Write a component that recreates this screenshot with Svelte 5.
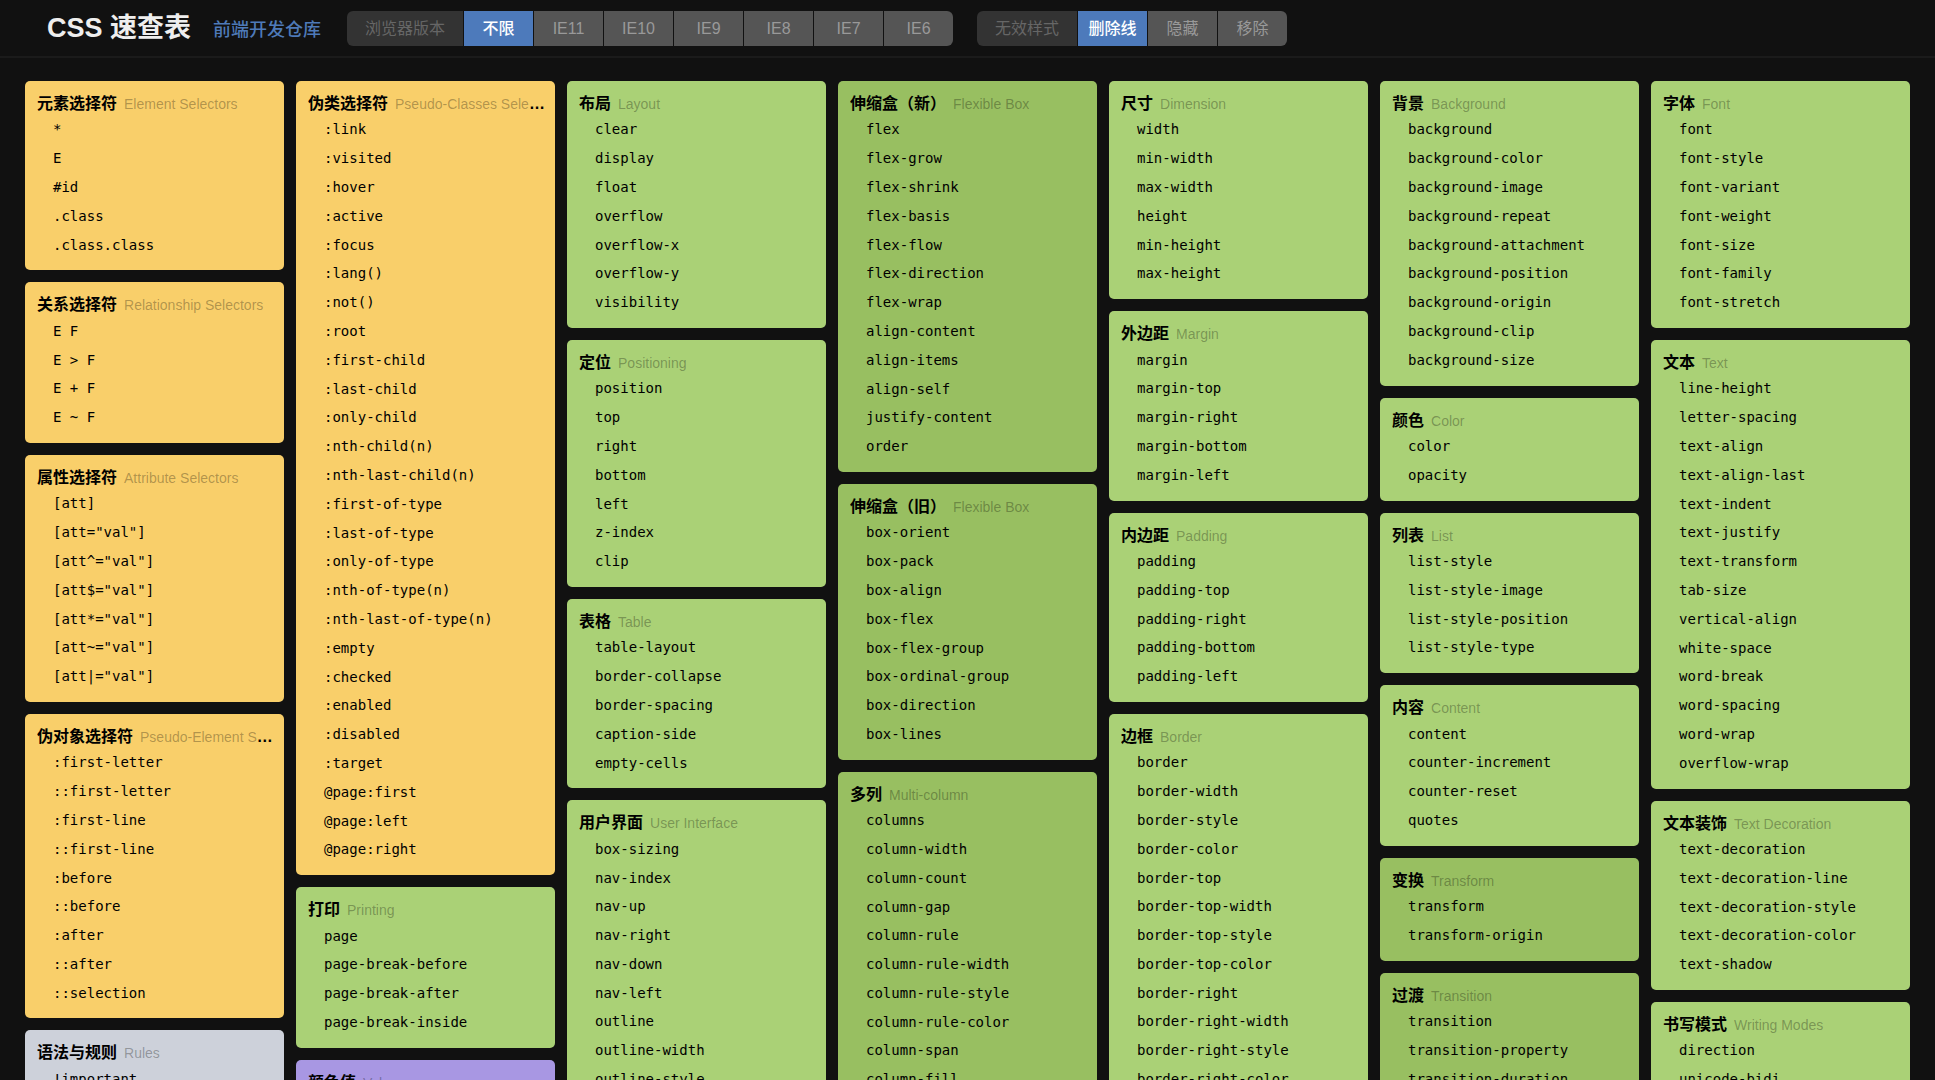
<script>
  const versions = ['不限', 'IE11', 'IE10', 'IE9', 'IE8', 'IE7', 'IE6'];
  const modes = ['删除线', '隐藏', '移除'];
  let version = $state('不限');
  let mode = $state('删除线');

  const card = (tone, title, sub, items) => ({ tone, title, sub, items: items.split('|') });

  const columns = [
    [
      card('yellow', '元素选择符', 'Element Selectors', '*|E|#id|.class|.class.class'),
      card('yellow', '关系选择符', 'Relationship Selectors', 'E F|E > F|E + F|E ~ F'),
      {
        tone: 'yellow', title: '属性选择符', sub: 'Attribute Selectors',
        items: ['[att]', '[att="val"]', '[att^="val"]', '[att$="val"]', '[att*="val"]', '[att~="val"]', '[att|="val"]']
      },
      card('yellow', '伪对象选择符', 'Pseudo-Element Selectors', ':first-letter|::first-letter|:first-line|::first-line|:before|::before|:after|::after|::selection'),
      card('gray', '语法与规则', 'Rules', '!important')
    ],
    [
      card('yellow', '伪类选择符', 'Pseudo-Classes Selectors', ':link|:visited|:hover|:active|:focus|:lang()|:not()|:root|:first-child|:last-child|:only-child|:nth-child(n)|:nth-last-child(n)|:first-of-type|:last-of-type|:only-of-type|:nth-of-type(n)|:nth-last-of-type(n)|:empty|:checked|:enabled|:disabled|:target|@page:first|@page:left|@page:right'),
      card('green', '打印', 'Printing', 'page|page-break-before|page-break-after|page-break-inside'),
      card('purple', '颜色值', 'Values', 'Color Name')
    ],
    [
      card('green', '布局', 'Layout', 'clear|display|float|overflow|overflow-x|overflow-y|visibility'),
      card('green', '定位', 'Positioning', 'position|top|right|bottom|left|z-index|clip'),
      card('green', '表格', 'Table', 'table-layout|border-collapse|border-spacing|caption-side|empty-cells'),
      card('green', '用户界面', 'User Interface', 'box-sizing|nav-index|nav-up|nav-right|nav-down|nav-left|outline|outline-width|outline-style')
    ],
    [
      card('olive', '伸缩盒（新）', 'Flexible Box', 'flex|flex-grow|flex-shrink|flex-basis|flex-flow|flex-direction|flex-wrap|align-content|align-items|align-self|justify-content|order'),
      card('olive', '伸缩盒（旧）', 'Flexible Box', 'box-orient|box-pack|box-align|box-flex|box-flex-group|box-ordinal-group|box-direction|box-lines'),
      card('olive', '多列', 'Multi-column', 'columns|column-width|column-count|column-gap|column-rule|column-rule-width|column-rule-style|column-rule-color|column-span|column-fill')
    ],
    [
      card('green', '尺寸', 'Dimension', 'width|min-width|max-width|height|min-height|max-height'),
      card('green', '外边距', 'Margin', 'margin|margin-top|margin-right|margin-bottom|margin-left'),
      card('green', '内边距', 'Padding', 'padding|padding-top|padding-right|padding-bottom|padding-left'),
      card('green', '边框', 'Border', 'border|border-width|border-style|border-color|border-top|border-top-width|border-top-style|border-top-color|border-right|border-right-width|border-right-style|border-right-color')
    ],
    [
      card('green', '背景', 'Background', 'background|background-color|background-image|background-repeat|background-attachment|background-position|background-origin|background-clip|background-size'),
      card('green', '颜色', 'Color', 'color|opacity'),
      card('green', '列表', 'List', 'list-style|list-style-image|list-style-position|list-style-type'),
      card('green', '内容', 'Content', 'content|counter-increment|counter-reset|quotes'),
      card('olive', '变换', 'Transform', 'transform|transform-origin'),
      card('olive', '过渡', 'Transition', 'transition|transition-property|transition-duration')
    ],
    [
      card('green', '字体', 'Font', 'font|font-style|font-variant|font-weight|font-size|font-family|font-stretch'),
      card('green', '文本', 'Text', 'line-height|letter-spacing|text-align|text-align-last|text-indent|text-justify|text-transform|tab-size|vertical-align|white-space|word-break|word-spacing|word-wrap|overflow-wrap'),
      card('green', '文本装饰', 'Text Decoration', 'text-decoration|text-decoration-line|text-decoration-style|text-decoration-color|text-shadow'),
      card('green', '书写模式', 'Writing Modes', 'direction|unicode-bidi')
    ]
  ];
</script>

<header>
  <h1>CSS 速查表</h1>
  <a class="repo" href="#repo">前端开发仓库</a>
  <div class="group" role="group" aria-labelledby="version-label">
    <span class="caption" id="version-label">浏览器版本</span>
    {#each versions as v}
      <button type="button" class:active={version === v} aria-pressed={version === v} onclick={() => (version = v)}>{v}</button>
    {/each}
  </div>
  <div class="group" role="group" aria-labelledby="mode-label">
    <span class="caption" id="mode-label">无效样式</span>
    {#each modes as m}
      <button type="button" class:active={mode === m} aria-pressed={mode === m} onclick={() => (mode = m)}>{m}</button>
    {/each}
  </div>
</header>

<main>
  {#each columns as column}
    <div class="column">
      {#each column as c}
        <section class={['card', c.tone]}>
          <h2>{c.title}<small>{c.sub}</small></h2>
          <ul>
            {#each c.items as item}
              <li><a href="#{item}">{item}</a></li>
            {/each}
          </ul>
        </section>
      {/each}
    </div>
  {/each}
</main>

<style>
  :global(body) {
    background: #111;
    font-family: "Liberation Sans", "Noto Sans CJK SC", sans-serif;
    font-size: 16px;
    color: #000;
  }
  :global(html) {
    scrollbar-width: none;
  }
  header {
    display: flex;
    align-items: center;
    height: 58px;
    padding: 0 47px;
    border-bottom: 2px solid #1b1b1b;
    box-sizing: border-box;
    white-space: nowrap;
  }
  h1 {
    margin: 0 22px 0 0;
    font-size: 27px;
    line-height: 40px;
    color: #eee;
  }
  .repo {
    margin-right: 26px;
    font-size: 18px;
    font-weight: 500;
    color: #4e7ab8;
    text-decoration: none;
  }
  .group {
    display: flex;
    gap: 1px;
    margin-right: 24px;
    border-radius: 6px;
    overflow: hidden;
  }
  .caption,
  button {
    height: 35px;
    border: 0;
    padding: 0 18px;
    background: #333;
    font: inherit;
    line-height: 35px;
    color: #666;
  }
  button {
    width: 69px;
    padding: 0;
    background: #555;
    color: #999;
    text-align: center;
    cursor: pointer;
  }
  button.active {
    background: #4d7abb;
    color: #fff;
    font-weight: 500;
  }
  main {
    display: grid;
    grid-template-columns: repeat(7, minmax(0, 1fr));
    align-items: start;
    gap: 12px;
    padding: 23px 25px 25px;
  }
  .column {
    display: flex;
    flex-direction: column;
    gap: 12px;
  }
  .card {
    padding: 12px 9px 11px 12px;
    border-radius: 5px;
  }
  .yellow { background: #f9cf6a; }
  .green { background: #aad176; }
  .olive { background: #98bf61; }
  .gray { background: #cdd1da; }
  .purple { background: #a897e3; }
  h2 {
    margin: 0;
    font-size: 16px;
    line-height: 1.4;
    overflow: hidden;
    white-space: nowrap;
    text-overflow: ellipsis;
  }
  small {
    margin-left: 7px;
    font-size: 14px;
    font-weight: 400;
    color: rgba(0, 0, 0, 0.3);
  }
  ul {
    margin: 0;
    padding: 0 0 0 16px;
    list-style: none;
    line-height: 1.8;
  }
  li a {
    font-family: "DejaVu Sans Mono", monospace;
    font-size: 14px;
    color: #000;
    text-decoration: none;
  }
</style>
